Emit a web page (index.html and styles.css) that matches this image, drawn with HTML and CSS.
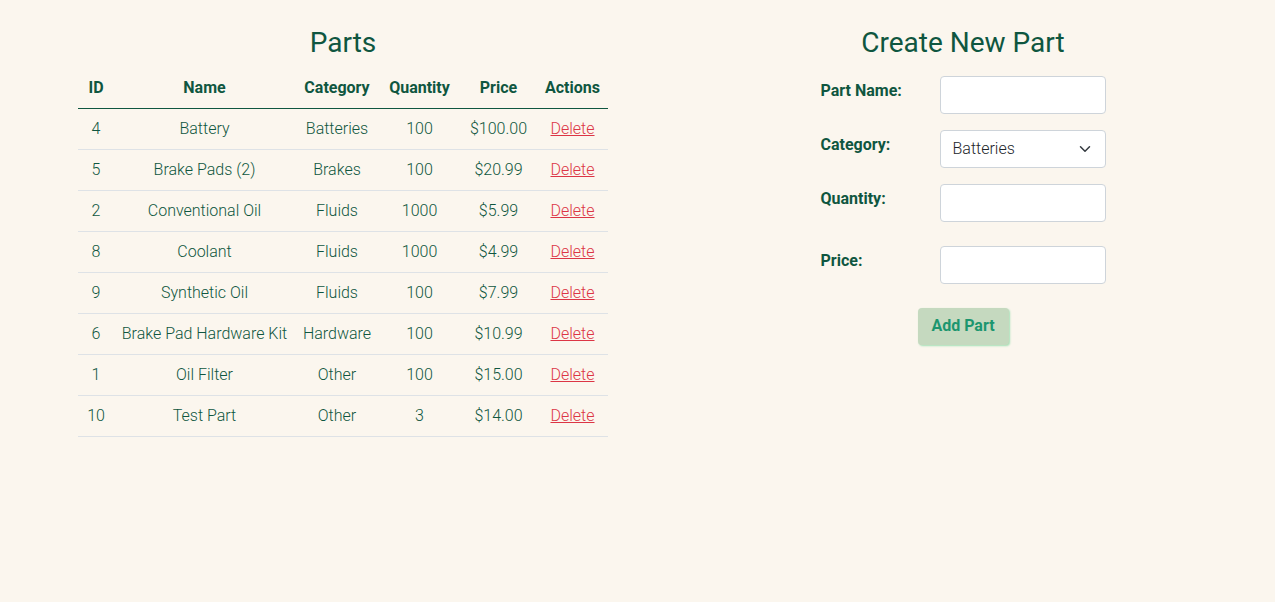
FILE: index.html
```html
<!DOCTYPE html>
<html lang="en">
<head>
<meta charset="utf-8">
<meta name="viewport" content="width=device-width, initial-scale=1">
<title>Parts</title>
<link rel="stylesheet" href="styles.css">
</head>
<body>
<main class="page">
  <section class="panel">
    <h1 class="title">Parts</h1>
    <table class="parts">
      <colgroup>
        <col class="col-id"><col class="col-name"><col class="col-category"><col class="col-quantity"><col class="col-price"><col class="col-actions">
      </colgroup>
      <thead>
        <tr><th scope="col">ID</th><th scope="col">Name</th><th scope="col">Category</th><th scope="col">Quantity</th><th scope="col">Price</th><th scope="col">Actions</th></tr>
      </thead>
      <tbody>
        <tr><td>4</td><td>Battery</td><td>Batteries</td><td>100</td><td>$100.00</td><td><a class="delete" href="#">Delete</a></td></tr>
        <tr><td>5</td><td>Brake Pads (2)</td><td>Brakes</td><td>100</td><td>$20.99</td><td><a class="delete" href="#">Delete</a></td></tr>
        <tr><td>2</td><td>Conventional Oil</td><td>Fluids</td><td>1000</td><td>$5.99</td><td><a class="delete" href="#">Delete</a></td></tr>
        <tr><td>8</td><td>Coolant</td><td>Fluids</td><td>1000</td><td>$4.99</td><td><a class="delete" href="#">Delete</a></td></tr>
        <tr><td>9</td><td>Synthetic Oil</td><td>Fluids</td><td>100</td><td>$7.99</td><td><a class="delete" href="#">Delete</a></td></tr>
        <tr><td>6</td><td>Brake Pad Hardware Kit</td><td>Hardware</td><td>100</td><td>$10.99</td><td><a class="delete" href="#">Delete</a></td></tr>
        <tr><td>1</td><td>Oil Filter</td><td>Other</td><td>100</td><td>$15.00</td><td><a class="delete" href="#">Delete</a></td></tr>
        <tr><td>10</td><td>Test Part</td><td>Other</td><td>3</td><td>$14.00</td><td><a class="delete" href="#">Delete</a></td></tr>
      </tbody>
    </table>
  </section>
  <section class="panel">
    <h2 class="title">Create New Part</h2>
    <form class="form">
      <div class="row">
        <label class="label" for="part-name">Part Name:</label>
        <input class="control" id="part-name" type="text">
      </div>
      <div class="row">
        <label class="label" for="category">Category:</label>
        <div class="select-wrap">
          <select class="control select" id="category">
            <option>Batteries</option><option>Brakes</option><option>Fluids</option><option>Hardware</option><option>Other</option>
          </select>
          <svg class="chevron" viewBox="0 0 16 16" aria-hidden="true"><path d="m2 5 6 6 6-6"/></svg>
        </div>
      </div>
      <div class="row row-wide">
        <label class="label" for="quantity">Quantity:</label>
        <input class="control" id="quantity" type="text">
      </div>
      <div class="row row-wide">
        <label class="label" for="price">Price:</label>
        <input class="control" id="price" type="text">
      </div>
      <button class="add" type="submit">Add Part</button>
    </form>
  </section>
</main>
</body>
</html>
```
FILE: styles.css
```css
*,
*::before,
*::after {
  box-sizing: border-box;
}

body {
  margin: 0;
  min-height: 100vh;
  background: #fbf6ee;
  color: #0f5640;
  font-family: Roboto, "Open Sans", "Noto Sans", sans-serif;
  font-size: 16px;
  font-weight: 300;
  line-height: 24px;
}

.page {
  display: grid;
  grid-template-columns: 1fr 1fr;
  padding: 26px 2px 26px 33px;
}

.panel {
  display: flex;
  flex-direction: column;
  align-items: center;
}

.title {
  margin: 0 0 8px;
  font-size: 28px;
  font-weight: 400;
  line-height: 34px;
}

.parts {
  border-collapse: collapse;
  text-align: center;
  white-space: nowrap;
}

.col-id {
  width: 36px;
}

.col-name {
  width: 181px;
}

.col-category {
  width: 84px;
}

.col-quantity {
  width: 81px;
}

.col-price {
  width: 77px;
}

.col-actions {
  width: 71px;
}

.parts th,
.parts td {
  padding: 8px 0;
  border-bottom: 1px solid #dee2e6;
}

.parts th {
  font-weight: 700;
  border-bottom-color: #0f5640;
}

.delete {
  color: #dc3545;
}

.form {
  display: flex;
  flex-direction: column;
  width: 285px;
  padding-top: 8px;
}

.row {
  display: grid;
  grid-template-columns: 119px 1fr;
  margin-bottom: 16px;
}

.row-wide {
  margin-bottom: 24px;
}

.label {
  padding-top: 3px;
  font-weight: 700;
}

.control {
  display: block;
  width: 100%;
  height: 38px;
  padding: 6px 12px;
  border: 1px solid #ced4da;
  border-radius: 4px;
  background: #fff;
  color: #212529;
  font: inherit;
}

.select-wrap {
  position: relative;
}

.select {
  appearance: none;
  padding-right: 36px;
}

.chevron {
  position: absolute;
  top: 13px;
  right: 15px;
  width: 12px;
  height: 12px;
  fill: none;
  stroke: #343a40;
  stroke-width: 2;
  stroke-linecap: round;
  stroke-linejoin: round;
  pointer-events: none;
}

.add {
  align-self: center;
  min-width: 91px;
  padding: 6px 12px;
  border: 0;
  border-bottom: 1px solid #c5d9bf;
  border-radius: 4px;
  background: #c5d9bf;
  box-shadow: 1px 1px 2px #a3e0b5;
  color: #1c966f;
  font: inherit;
  font-weight: 700;
}
```
